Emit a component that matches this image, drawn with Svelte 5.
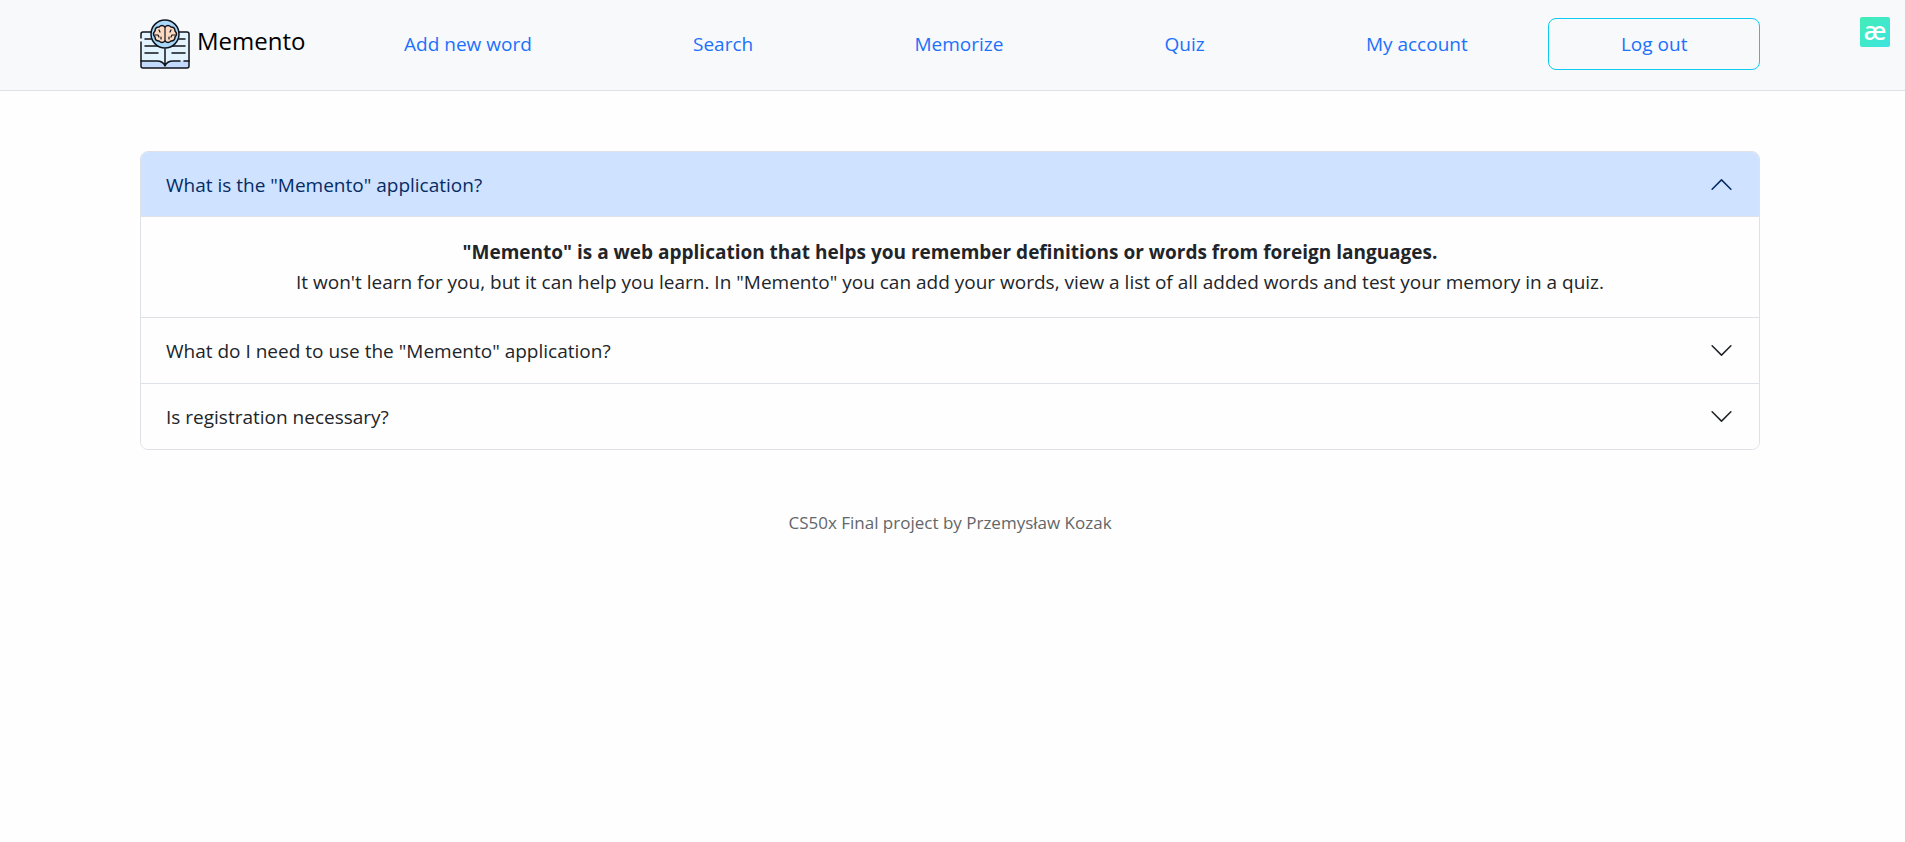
<script>
  const links = ['Add new word', 'Search', 'Memorize', 'Quiz', 'My account'];

  const questions = [
    {
      title: 'What is the "Memento" application?',
      lead: '"Memento" is a web application that helps you remember definitions or words from foreign languages.',
      text: 'It won\'t learn for you, but it can help you learn. In "Memento" you can add your words, view a list of all added words and test your memory in a quiz.'
    },
    { title: 'What do I need to use the "Memento" application?' },
    { title: 'Is registration necessary?' }
  ];

  let open = $state(0);
</script>

<header>
  <div class="container bar">
    <a class="brand" href="#home">
      <svg class="logo" viewBox="0 0 50 50" fill="none" stroke="#10131a" stroke-width="1.5" stroke-linecap="round" stroke-linejoin="round" aria-hidden="true">
        <path d="M2 13H48L49 14V49H1V14Z" fill="#e3f4ff" stroke="none" />
        <path d="M1 42H18Q23 42 25 47Q27 42 32 42H49V49H1Z" fill="#c3dafd" stroke="none" />
        <path d="M1 19V15Q1 13 3 13H47Q49 13 49 15V47Q49 49 47 49H3Q1 49 1 47V23" />
        <path d="M1 42H17Q23 42 25 47Q27 42 33 42H40M44 42H49M25 30V47" />
        <path d="M5 20H11M39 20H45M5 27H18M32 27H45M5 34H18M32 34H45" />
        <circle cx="25" cy="15" r="14" fill="#a9d8fb" />
        <path d="M25 8Q22 5 19 8Q15 8 15 12Q12 15 15 18Q15 22 19 22Q22 25 25 22Q28 25 31 22Q35 22 35 18Q38 15 35 12Q35 8 31 8Q28 5 25 8Z" fill="#fcd9c0" />
        <path d="M25 8V22M19 11L20 13M15 16H18L19 18M21 18V20M31 11L30 13M35 16H32L31 18M29 18V20" stroke-width="1.2" />
      </svg>
      <span>Memento</span>
    </a>
    <nav>
      {#each links as link}
        <a href="#{link.toLowerCase().replaceAll(' ', '-')}">{link}</a>
      {/each}
      <a class="logout" href="#logout">Log out</a>
    </nav>
  </div>
  <button class="extension" aria-label="æ">æ</button>
</header>

<main>
  <div class="container accordion">
    {#each questions as q, i}
      <section>
        <h2>
          <button class:active={open === i} aria-expanded={open === i} onclick={() => (open = open === i ? -1 : i)}>
            <span>{q.title}</span>
            <svg class="chevron" viewBox="0 0 16 16" fill="currentColor" aria-hidden="true">
              <path fill-rule="evenodd" d="M1.646 4.646a.5.5 0 0 1 .708 0L8 10.293l5.646-5.647a.5.5 0 0 1 .708.708l-6 6a.5.5 0 0 1-.708 0l-6-6a.5.5 0 0 1 0-.708z" />
            </svg>
          </button>
        </h2>
        {#if open === i && q.lead}
          <div class="answer">
            <strong>{q.lead}</strong><br />{q.text}
          </div>
        {/if}
      </section>
    {/each}
  </div>
</main>

<footer>CS50x Final project by Przemysław Kozak</footer>

<style>
  :global(body) {
    background: #fefefe;
    color: #212529;
    font-family: "Segoe UI", "Open Sans", "Noto Sans", sans-serif;
    font-size: 19px;
    line-height: 30px;
  }

  * {
    box-sizing: border-box;
  }

  header,
  main,
  footer {
    padding-right: 5px;
  }

  .container {
    width: 90%;
    max-width: 1620px;
    margin: 0 auto;
  }

  header {
    position: relative;
    background: #f8f9fb;
    border-bottom: 1px solid #dee2e6;
  }

  .bar {
    display: flex;
    align-items: center;
    padding: 18px 0 20px;
  }

  a {
    color: #2170fb;
    text-decoration: none;
  }

  .brand {
    display: flex;
    gap: 7px;
    margin-right: 18px;
    color: #000;
    font-size: 24px;
  }

  .brand span {
    padding-top: 7px;
  }

  .logo {
    width: 50px;
    height: 50px;
  }

  nav {
    flex: 1;
    display: flex;
    align-items: center;
  }

  nav a {
    flex: 1 1 auto;
    margin: 0 9px;
    padding: 10px 0;
    text-align: center;
    white-space: nowrap;
  }

  nav .logout {
    margin: 0;
    border: 1px solid #0dcaf0;
    border-radius: 8px;
  }

  .extension {
    position: absolute;
    top: 17px;
    right: 15px;
    width: 30px;
    height: 30px;
    padding: 0 0 4px;
    border: 0;
    border-radius: 2px;
    background: linear-gradient(135deg, #43edb5, #3de4e0);
    color: #fff;
    font: 500 26px/26px "Noto Sans", sans-serif;
    text-align: center;
  }

  main {
    padding-top: 60px;
  }

  .accordion {
    border: 1px solid #dee2e6;
    border-radius: 8px;
    overflow: hidden;
  }

  section + section {
    border-top: 1px solid #dee2e6;
  }

  h2 {
    margin: 0;
    font-size: 19px;
    font-weight: 400;
  }

  h2 button {
    display: flex;
    align-items: center;
    justify-content: space-between;
    width: 100%;
    padding: 20px 25px;
    border: 0;
    background: #fefefe;
    color: #212529;
    font: inherit;
    line-height: 25px;
    text-align: left;
  }

  h2 span {
    padding-top: 2px;
    line-height: 23px;
  }

  h2 .active {
    background: #cfe2ff;
    box-shadow: inset 0 -1px 0 #dee2e6;
    color: #052c65;
  }

  .chevron {
    width: 25px;
    height: 25px;
  }

  .active .chevron {
    transform: rotate(180deg);
  }

  .answer {
    padding: 20px 25px;
    text-align: center;
  }

  footer {
    padding-top: 58px;
    color: #636669;
    font-size: 17px;
    text-align: center;
  }
</style>
